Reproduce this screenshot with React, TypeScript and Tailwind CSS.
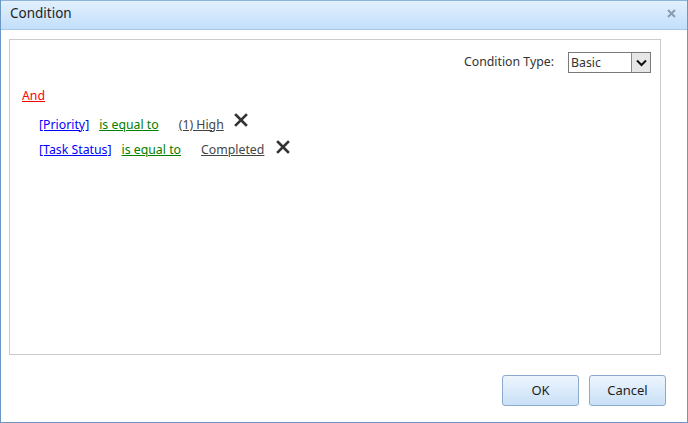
const font = { fontFamily: '"Segoe UI", "Noto Sans", "Open Sans", sans-serif' };

function CloseIcon({ className }: { className?: string }) {
  return (
    <svg width="14" height="14" viewBox="0 0 14 14" className={className}>
      <path d="M2 2 L12 12 M12 2 L2 12" stroke="#333" strokeWidth="2.6" strokeLinecap="square" />
    </svg>
  );
}

type Row = { field: string; op: string; value: string; xGap: string };

const rows: Row[] = [
  { field: "[Priority]", op: "is equal to", value: "(1) High", xGap: "ml-[10px] -mt-[9px]" },
  { field: "[Task Status]", op: "is equal to", value: "Completed", xGap: "ml-[12px] -mt-[5px]" },
];

export default function App() {
  return (
    <div className="w-[688px] h-[423px] bg-white text-[12.3px] text-[#333]" style={font}>
      <div className="h-full flex flex-col border border-t-0 border-[#6b97c4]">
        <div className="h-[30px] flex items-center justify-between border-t border-[#8fb3d8] bg-gradient-to-b from-[#e2f0fd] to-[#c2dffb] border-b border-b-[#a7c8e8] pl-[9px] pr-[11px]">
          <span className="text-[13.5px] text-[#1e1e1e] leading-none -mt-[2px]">Condition</span>
          <svg width="9" height="9" viewBox="0 0 9 9" className="-mt-[4px]">
            <path d="M1 1 L8 8 M8 1 L1 8" stroke="#8a9cae" strokeWidth="2" />
          </svg>
        </div>
        <div className="h-[1px] bg-white" />
        <div className="flex-1 flex flex-col pl-[8px] pr-[26px] pt-[8px]">
          <div className="h-[316px] border border-[#cbcbcb] flex flex-col">
            <div className="flex justify-end items-center pt-[12px] pr-[9px]">
              <span className="text-[#333] mr-[14px]">Condition Type:</span>
              <div className="w-[83px] h-[21px] border border-[#7a7a7a] flex items-stretch">
                <span className="flex-1 pl-[2px] leading-[19px]">Basic</span>
                <div className="w-[19px] border-l border-[#8a8a8a] bg-[#e6e6e6] flex items-center justify-center">
                  <svg width="11" height="8" viewBox="0 0 11 8">
                    <path d="M1 1.5 L5.5 6 L10 1.5" fill="none" stroke="#111" strokeWidth="2" />
                  </svg>
                </div>
              </div>
            </div>
            <div className="pl-[12px] pt-[14px]">
              <a className="text-[#ff0000] underline">And</a>
            </div>
            <div className="pl-[29px] pt-[10px] flex flex-col gap-[6px]">
              {rows.map((r) => (
                <div key={r.field} className="flex items-center h-[19px]">
                  <a className="text-[#0000ff] underline">{r.field}</a>
                  <a className="text-[#008000] underline ml-[10px]">{r.op}</a>
                  <a className="text-[#444] underline ml-[20px]">{r.value}</a>
                  <CloseIcon className={r.xGap} />
                </div>
              ))}
            </div>
          </div>
          <div className="flex justify-end gap-[10px] pt-[20px] -mr-[5px]">
            {["OK", "Cancel"].map((b) => (
              <button
                key={b}
                className="w-[77px] h-[31px] rounded-[3px] border border-[#8aa9cc] bg-gradient-to-b from-[#edf5fd] to-[#c9e0f7] text-[#1e1e1e] text-[13px]"
              >
                {b}
              </button>
            ))}
          </div>
        </div>
      </div>
    </div>
  );
}
